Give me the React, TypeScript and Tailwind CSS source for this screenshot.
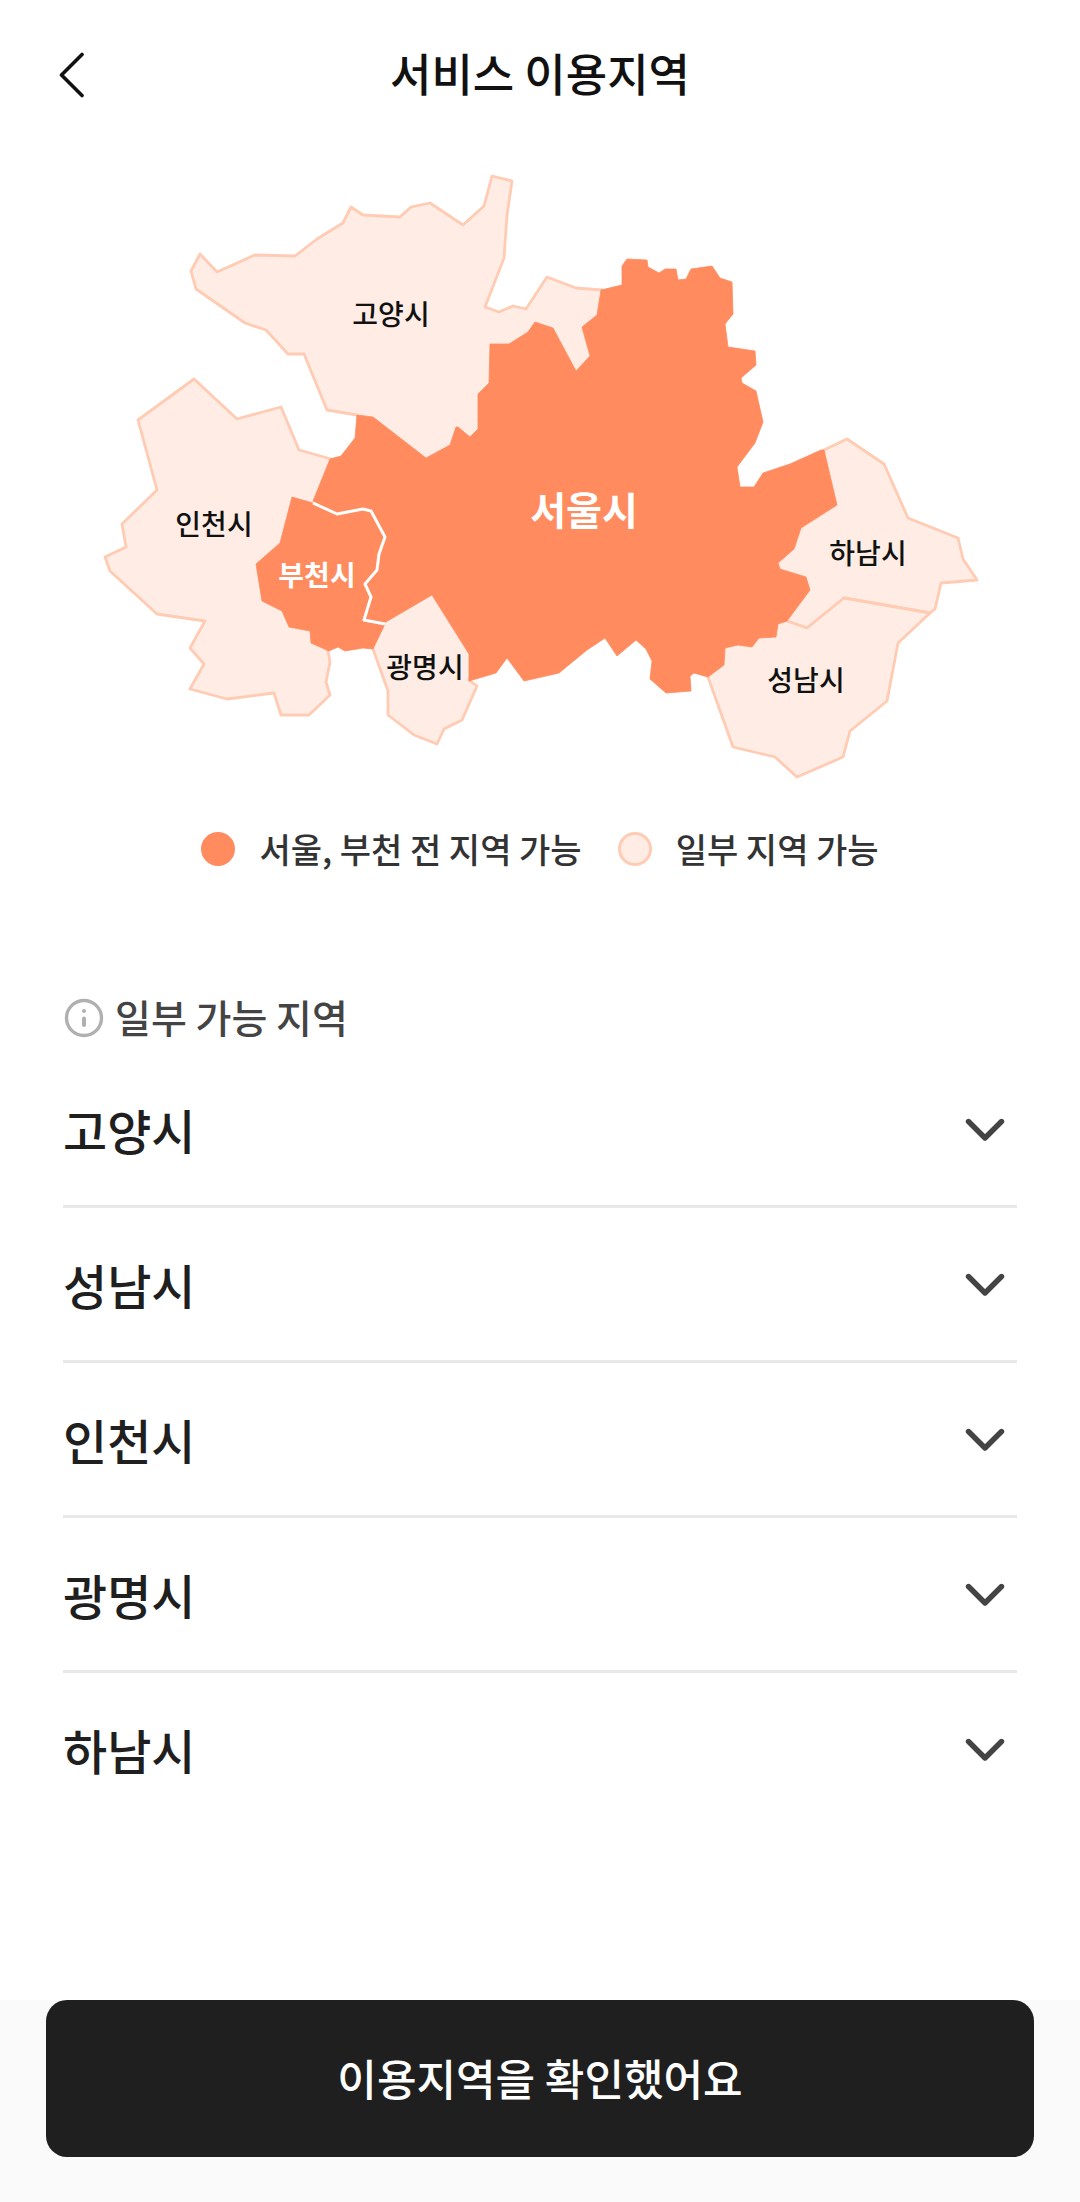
import React, { useState } from "react";
import clsx from "clsx";

interface Region {
    name: string;
    points: string;
}

interface MapLabel {
    name: string;
    x: number;
    y: number;
}

// Regions that are only partly covered, drawn underneath the full ones
const partialRegions: Region[] = [
    {
        name: "고양시",
        points: "357,415 327,410 304,354 288,354 266,330 245,323 196,289 191,271 200,254 217,272 255,255 295,256 317,239 343,223 351,207 363,215 400,217 411,207 430,203 463,225 484,206 492,176 512,181 507,215 504,258 485,307 499,312 513,306 526,309 547,277 576,288 602,290 620,300 620,400 480,480 400,480",
    },
    {
        name: "인천시",
        points: "194,379 237,419 281,407 299,450 331,459 345,520 330,640 328,651 330,662 326,682 330,695 309,715 281,715 274,693 227,699 190,689 204,664 190,648 205,621 157,614 110,571 105,557 126,547 122,524 157,490 138,420",
    },
    {
        name: "광명시",
        points: "373,649 388,691 388,715 414,735 437,744 444,729 462,720 477,686 469,680 480,650 432,580 375,615 368,640",
    },
    {
        name: "하남시",
        points: "824,450 847,439 884,464 908,518 958,538 963,559 977,580 941,583 935,609 930,613 844,598 807,628 787,621 765,605 765,530 820,490",
    },
    {
        name: "성남시",
        points: "787,621 807,628 844,598 930,613 898,643 887,701 850,731 843,757 797,777 775,757 733,747 708,677 705,640 770,610",
    },
];

const fullRegions: Region[] = [
    {
        name: "서울시",
        points: "357,415 373,417 426,458 450,445 456,427 458,427 470,437 478,429 478,394 489,383 490,344 509,344 528,332 535,322 553,328 576,371 590,356 582,327 597,315 601,290 622,285 622,266 627,259 647,260 648,267 659,273 665,269 676,269 678,280 686,279 691,269 712,266 720,278 732,282 733,314 725,324 728,347 755,351 756,365 741,378 742,383 756,391 763,422 755,443 737,467 740,487 754,487 763,473 790,464 821,450 824,450 837,505 801,528 794,549 778,563 780,569 806,577 810,590 787,621 778,624 776,637 759,638 752,647 738,645 725,648 724,665 708,677 694,673 690,676 691,691 666,693 650,679 652,661 646,649 636,640 617,656 605,638 587,650 559,673 524,681 507,658 496,673 469,681 469,654 432,595 384,623 364,620 371,597 365,584 377,570 379,554 385,537 371,511 363,509 337,514 313,501 330,459 341,456 355,438",
    },
    {
        name: "부천시",
        points: "292,497 313,503 337,514 363,509 371,511 385,537 379,554 377,570 365,584 371,597 364,620 385,624 373,649 363,648 345,651 338,647 329,651 311,643 310,631 289,627 282,611 262,601 256,564 280,543",
    },
];

const partialLabels: MapLabel[] = [
    { name: "고양시", x: 391, y: 325 },
    { name: "인천시", x: 214, y: 535 },
    { name: "광명시", x: 425, y: 678 },
    { name: "하남시", x: 868, y: 564 },
    { name: "성남시", x: 806, y: 691 },
];

const cities = ["고양시", "성남시", "인천시", "광명시", "하남시"];

function ServiceMap() {
    return (
        <svg viewBox="0 150 1080 650" className="block w-full" role="img" aria-label="서비스 이용지역 지도">
            <g fill="#ffede5" stroke="#ffcbb3" strokeWidth="2.8" strokeLinejoin="round">
                {partialRegions.map((region) => (
                    <polygon key={region.name} points={region.points} />
                ))}
            </g>
            <g fill="#ff8b5e" stroke="#ff8b5e" strokeWidth="0.8" strokeLinejoin="round">
                {fullRegions.map((region) => (
                    <polygon key={region.name} points={region.points} />
                ))}
            </g>

            {/* Seoul / Bucheon border */}
            <polyline
                points="313,503 337,514 363,509 371,511 385,537 379,554 377,570 365,584 371,597 364,620 385,624"
                fill="none"
                stroke="#ffffff"
                strokeWidth="3"
                strokeLinejoin="round"
            />

            <g textAnchor="middle">
                {partialLabels.map((label) => (
                    <text key={label.name} x={label.x} y={label.y} className="fill-[#111111] text-[28px] font-medium">
                        {label.name}
                    </text>
                ))}
                <text x="317" y="586" className="fill-white text-[28px] font-bold">
                    부천시
                </text>
                <text x="584" y="525" className="fill-white text-[39px] font-bold">
                    서울시
                </text>
            </g>
        </svg>
    );
}

export default function ServiceArea() {
    const [openCity, setOpenCity] = useState<string | null>(null);

    return (
        <div className="flex min-h-screen flex-col bg-white font-['Noto_Sans_CJK_KR',sans-serif] text-[#1f1f1f]">
            {/* Header */}
            <header className="grid h-[150px] grid-cols-[1fr_auto_1fr] items-center px-12">
                <button type="button" aria-label="뒤로" className="flex h-12 w-12 items-center justify-center">
                    <svg width="26" height="46" viewBox="0 0 26 46" fill="none">
                        <path d="M23 2.5L2.5 23L23 43.5" stroke="#111111" strokeWidth="3.6" strokeLinecap="round" strokeLinejoin="round" />
                    </svg>
                </button>
                <h1 className="pb-1 text-[45px] leading-[60px] font-medium text-[#111111]">서비스 이용지역</h1>
            </header>

            <main>
                <ServiceMap />

                {/* Legend */}
                <ul className="mt-6 flex items-center justify-center gap-9 text-[34px] leading-[50px] font-medium text-[#333333]">
                    <li className="flex items-center gap-6">
                        <span className="h-[34px] w-[34px] rounded-full bg-[#ff8b5e]" />
                        서울, 부천 전 지역 가능
                    </li>
                    <li className="flex items-center gap-6">
                        <span className="h-[34px] w-[34px] rounded-full border-3 border-[#ffcbb3] bg-[#ffede5]" />
                        일부 지역 가능
                    </li>
                </ul>

                {/* Partially covered cities */}
                <section className="mt-[114px] px-[63px]">
                    <h2 className="flex items-center gap-[10px] text-[39px] leading-[56px] font-medium text-[#444444]">
                        <svg width="42" height="42" viewBox="0 0 42 42" fill="none">
                            <circle cx="21" cy="21" r="17.5" stroke="#b0b0b0" strokeWidth="3.4" />
                            <circle cx="21" cy="14" r="2" fill="#b0b0b0" />
                            <path d="M21 21.5V28" stroke="#b0b0b0" strokeWidth="4" strokeLinecap="round" />
                        </svg>
                        <span className="pb-1">일부 가능 지역</span>
                    </h2>
                    <ul className="mt-[5px]">
                        {cities.map((city) => (
                            <li key={city} className="border-b-3 border-[#e8e8e8] last:border-b-0">
                                <button
                                    type="button"
                                    aria-expanded={openCity === city}
                                    onClick={() => setOpenCity(openCity === city ? null : city)}
                                    className="flex h-[152px] w-full items-center justify-between pr-3 text-[48px] leading-[72px] font-medium"
                                >
                                    {city}
                                    <svg
                                        width="40"
                                        height="24"
                                        viewBox="0 0 40 24"
                                        fill="none"
                                        className={clsx(openCity === city && "rotate-180")}
                                    >
                                        <path d="M3.5 4.5L20 21L36.5 4.5" stroke="#444444" strokeWidth="5.4" strokeLinecap="round" strokeLinejoin="round" />
                                    </svg>
                                </button>
                            </li>
                        ))}
                    </ul>
                </section>
            </main>

            {/* Bottom action */}
            <footer className="mt-auto bg-[#fafafa] px-[46px] pb-[45px]">
                <button type="button" className="h-[157px] w-full rounded-[21px] bg-[#1f1f1f] pb-1 text-[43px] leading-[60px] font-medium text-white">
                    이용지역을 확인했어요
                </button>
            </footer>
        </div>
    );
}
